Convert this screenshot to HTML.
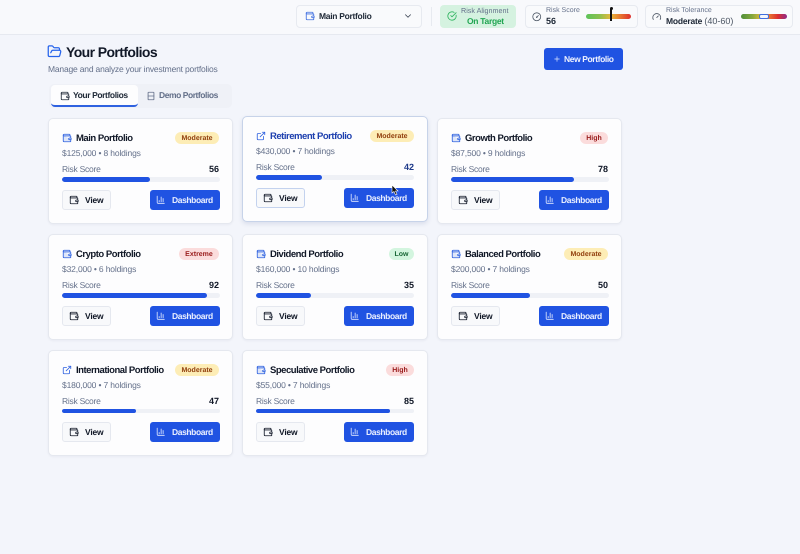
<!DOCTYPE html>
<html><head><meta charset="utf-8"><style>
*{box-sizing:border-box;margin:0;padding:0}
html,body{width:800px;height:554px;overflow:hidden;background:#f3f5fb;font-family:"Liberation Sans",sans-serif;position:relative;text-rendering:geometricPrecision}
.a{position:absolute;white-space:nowrap}
svg.i{position:absolute;fill:none;stroke:currentColor;stroke-width:2;stroke-linecap:round;stroke-linejoin:round}
.top{position:absolute;left:0;top:0;width:800px;height:35px;background:#f8f9fc;border-bottom:1px solid #e6e9f0}
.box{position:absolute;top:5px;height:23px;background:#f9fafc;border:1px solid #e7eaf0;border-radius:4px}
.card{position:absolute;width:185px;height:106px;background:#fdfdfe;border:1px solid #e5e8ef;border-radius:5px;box-shadow:0 1px 2px rgba(30,40,80,.05)}
.card.m{width:186px}
.card.h{border-color:#c7d3e9;box-shadow:0 2px 5px rgba(30,60,120,.12)}
.t{position:absolute;left:27px;top:13px;font-size:9.5px;letter-spacing:-.48px;line-height:13px;font-weight:bold;color:#111827;white-space:nowrap}
.h .t{color:#1e40af}
.ic{left:13px;top:14px;width:10px;height:10px;color:#2f62e0;fill:rgba(47,98,224,.15)!important}
.b{position:absolute;top:13px;right:13px;height:12px;border-radius:6px;font-size:7px;line-height:13px;font-weight:bold;text-align:center}
.mod{width:44px;background:#fdedb6;color:#92400e}
.hi{width:28px;background:#fbdcdc;color:#991b1b}
.ex{width:40px;background:#fbdcdc;color:#991b1b}
.lo{width:25px;background:#d3f5df;color:#166534}
.s{position:absolute;left:13px;top:29px;font-size:8.5px;letter-spacing:-.15px;line-height:11px;color:#64708a;white-space:nowrap}
.r{position:absolute;left:13px;top:45px;font-size:8.5px;letter-spacing:-.25px;line-height:11px;color:#64708a}
.n{position:absolute;right:13px;top:45px;font-size:9px;line-height:11px;font-weight:bold;color:#111827}
.h .n{color:#1e3a8a}
.bar{position:absolute;left:13px;top:58px;width:158px;height:4.5px;background:#eff1f6;border-radius:3px;overflow:hidden}
.bar i{display:block;height:100%;background:#2053e2;border-radius:3px}
.v{position:absolute;left:13px;top:71px;width:48.500px;height:20px;background:#f8f9fb;border:1px solid #e5e8ef;border-radius:3px;color:#111827;font-size:8.5px;letter-spacing:-.2px;font-weight:bold;line-height:18px;padding-left:22px}
.h .v{border-color:#c3d2ee}
.v svg{left:6px;top:4px;width:10px;height:10px}
.d{position:absolute;left:101px;top:71px;width:70px;height:20px;background:#2053e2;border-radius:3px;color:#e8eeff;font-size:8.5px;letter-spacing:-.4px;font-weight:bold;line-height:20px;padding-left:22px}
.d svg{left:6px;top:5px;width:9.5px;height:9.5px}
</style></head><body>
<svg width="0" height="0" style="position:absolute"><defs>
<symbol id="w" viewBox="0 0 24 24"><path d="M19 7V4a1 1 0 0 0-1-1H5a2 2 0 0 0 0 4h15a1 1 0 0 1 1 1v4h-3a2 2 0 0 0 0 4h3a1 1 0 0 0 1-1v-2a1 1 0 0 0-1-1"/><path d="M3 5v14a2 2 0 0 0 2 2h15a1 1 0 0 0 1-1v-4"/></symbol>
<symbol id="e" viewBox="0 0 24 24"><path d="M18 13v6a2 2 0 0 1-2 2H5a2 2 0 0 1-2-2V8a2 2 0 0 1 2-2h6"/><path d="M15 3h6v6"/><path d="M10 14 21 3"/></symbol>
<symbol id="c" viewBox="0 0 24 24"><path d="M3 3v16a2 2 0 0 0 2 2h16"/><path d="M18 17V9"/><path d="M13 17V5"/><path d="M8 17v-3"/></symbol>
</defs></svg>

<div class="top"></div>
<div class="box" style="left:296px;width:126px"></div>
<svg class="i" style="left:305px;top:11px;width:10px;height:10px;color:#3f6fe0"><use href="#w"/></svg>
<div class="a" style="left:319px;top:11px;font-size:8.5px;letter-spacing:-.3px;line-height:11px;font-weight:bold;color:#1f2937">Main Portfolio</div>
<svg class="i" viewBox="0 0 24 24" style="left:403px;top:11px;width:10px;height:10px;color:#374151"><path d="m6 9 6 6 6-6"/></svg>
<div class="a" style="left:431px;top:7px;width:1px;height:19px;background:#e7eaf0"></div>

<div class="a" style="left:440px;top:5px;width:76px;height:23px;background:#d5f2e0;border-radius:4px"></div>
<svg class="i" viewBox="0 0 24 24" style="left:447px;top:11px;width:10px;height:10px;color:#2fb45f"><path d="M21.801 10A10 10 0 1 1 17 3.335"/><path d="m9 11 3 3L22 4"/></svg>
<div class="a" style="left:461px;top:6px;font-size:7.2px;line-height:10px;color:#64708a">Risk Alignment</div>
<div class="a" style="left:467px;top:16px;font-size:8.5px;letter-spacing:-.3px;line-height:11px;font-weight:bold;color:#22a653">On Target</div>

<div class="box" style="left:525px;width:113px"></div>
<svg class="i" viewBox="0 0 24 24" style="left:532px;top:12px;width:9.5px;height:9.5px;color:#4b5563"><circle cx="12" cy="12" r="10"/><path d="m12 13 4-4"/><circle cx="12" cy="13" r="1"/></svg>
<div class="a" style="left:546px;top:6px;font-size:7px;line-height:10px;color:#64708a">Risk Score</div>
<div class="a" style="left:546px;top:16px;font-size:9px;line-height:11px;font-weight:bold;color:#1f2937">56</div>
<div class="a" style="left:586px;top:14px;width:45px;height:5px;border-radius:3px;background:linear-gradient(90deg,#5cc45a 0,#8cc04e 30%,#e6b93c 55%,#e87a30 75%,#dc2f2f 100%)"></div>
<div class="a" style="left:610px;top:9px;width:2px;height:12px;background:#111"></div>
<div class="a" style="left:609.5px;top:7px;width:3px;height:3px;border-radius:50%;background:#111"></div>

<div class="box" style="left:645px;width:148px"></div>
<svg class="i" viewBox="0 0 24 24" style="left:652px;top:12px;width:9.5px;height:9.5px;color:#4b5563"><path d="m12 14 4-4"/><path d="M3.34 19a10 10 0 1 1 17.32 0"/></svg>
<div class="a" style="left:666px;top:6px;font-size:7px;line-height:10px;color:#64708a">Risk Tolerance</div>
<div class="a" style="left:666px;top:16px;font-size:8.5px;letter-spacing:-.2px;line-height:11px;font-weight:bold;color:#1f2937">Moderate <span style="color:#4b5563;font-weight:normal;font-size:9px;letter-spacing:0">(40-60)</span></div>
<div class="a" style="left:741px;top:14px;width:46px;height:5px;border-radius:3px;background:linear-gradient(90deg,#4f8f3a 0,#86a83c 25%,#e6b93c 45%,#e87a30 60%,#dc2f2f 80%,#8e2a8a 100%)"></div>
<div class="a" style="left:759px;top:14px;width:10px;height:5px;border-radius:2px;background:#f4f6fc;border:1px solid #3f6fe0"></div>

<svg class="i" viewBox="0 0 24 24" style="left:47px;top:44px;width:15px;height:15px;color:#2563eb"><path d="m6 14 1.5-2.9A2 2 0 0 1 9.24 10H20a2 2 0 0 1 1.94 2.5l-1.54 6a2 2 0 0 1-1.95 1.5H4a2 2 0 0 1-2-2V5a2 2 0 0 1 2-2h3.9a2 2 0 0 1 1.69.9l.81 1.2a2 2 0 0 0 1.67.9H18a2 2 0 0 1 2 2v2"/></svg>
<div class="a" style="left:66px;top:43px;font-size:14px;letter-spacing:-.6px;line-height:18px;font-weight:bold;color:#111827">Your Portfolios</div>
<div class="a" style="left:48px;top:64px;font-size:8.5px;letter-spacing:-.19px;line-height:11px;color:#64708a">Manage and analyze your investment portfolios</div>

<div class="a" style="left:544px;top:48px;width:79px;height:22px;background:#2053e2;border-radius:3px"></div>
<svg class="i" viewBox="0 0 24 24" style="left:553px;top:55px;width:8px;height:8px;color:#dfe7ff"><path d="M5 12h14"/><path d="M12 5v14"/></svg>
<div class="a" style="left:564px;top:54px;font-size:8.5px;letter-spacing:-.4px;line-height:11px;font-weight:bold;color:#eef2ff">New Portfolio</div>

<div class="a" style="left:49px;top:84px;width:183px;height:24px;background:#eff1f7;border-radius:5px"></div>
<div class="a" style="left:51px;top:85px;width:87px;height:22px;background:#fdfdfe;border-radius:4px;border-bottom:2px solid #2f62e0"></div>
<svg class="i" style="left:60px;top:91px;width:10px;height:10px;color:#1f2937"><use href="#w"/></svg>
<div class="a" style="left:73px;top:90px;font-size:8.5px;letter-spacing:-.4px;line-height:11px;font-weight:bold;color:#1f2937">Your Portfolios</div>
<svg class="i" viewBox="0 0 24 24" style="left:146px;top:91px;width:10px;height:10px;color:#64708a"><rect x="5" y="3" width="14" height="18" rx="1"/><path d="M5 12h14"/></svg>
<div class="a" style="left:159px;top:90px;font-size:8.5px;letter-spacing:-.45px;line-height:11px;font-weight:bold;color:#64708a">Demo Portfolios</div>

<div class="card" style="left:48px;top:118px">
<svg class="i ic"><use href="#w"/></svg><div class="t">Main Portfolio</div><div class="b mod">Moderate</div>
<div class="s">$125,000 • 8 holdings</div><div class="r">Risk Score</div><div class="n">56</div><div class="bar"><i style="width:56%"></i></div>
<div class="v"><svg class="i"><use href="#w"/></svg>View</div><div class="d"><svg class="i"><use href="#c"/></svg>Dashboard</div></div>

<div class="card h m" style="left:242px;top:116px">
<svg class="i ic" style="fill:none!important"><use href="#e"/></svg><div class="t">Retirement Portfolio</div><div class="b mod">Moderate</div>
<div class="s">$430,000 • 7 holdings</div><div class="r">Risk Score</div><div class="n">42</div><div class="bar"><i style="width:42%"></i></div>
<div class="v"><svg class="i"><use href="#w"/></svg>View</div><div class="d"><svg class="i"><use href="#c"/></svg>Dashboard</div></div>

<div class="card" style="left:437px;top:118px">
<svg class="i ic"><use href="#w"/></svg><div class="t">Growth Portfolio</div><div class="b hi">High</div>
<div class="s">$87,500 • 9 holdings</div><div class="r">Risk Score</div><div class="n">78</div><div class="bar"><i style="width:78%"></i></div>
<div class="v"><svg class="i"><use href="#w"/></svg>View</div><div class="d"><svg class="i"><use href="#c"/></svg>Dashboard</div></div>

<div class="card" style="left:48px;top:234px">
<svg class="i ic"><use href="#w"/></svg><div class="t">Crypto Portfolio</div><div class="b ex">Extreme</div>
<div class="s">$32,000 • 6 holdings</div><div class="r">Risk Score</div><div class="n">92</div><div class="bar"><i style="width:92%"></i></div>
<div class="v"><svg class="i"><use href="#w"/></svg>View</div><div class="d"><svg class="i"><use href="#c"/></svg>Dashboard</div></div>

<div class="card m" style="left:242px;top:234px">
<svg class="i ic"><use href="#w"/></svg><div class="t">Dividend Portfolio</div><div class="b lo">Low</div>
<div class="s">$160,000 • 10 holdings</div><div class="r">Risk Score</div><div class="n">35</div><div class="bar"><i style="width:35%"></i></div>
<div class="v"><svg class="i"><use href="#w"/></svg>View</div><div class="d"><svg class="i"><use href="#c"/></svg>Dashboard</div></div>

<div class="card" style="left:437px;top:234px">
<svg class="i ic"><use href="#w"/></svg><div class="t">Balanced Portfolio</div><div class="b mod">Moderate</div>
<div class="s">$200,000 • 7 holdings</div><div class="r">Risk Score</div><div class="n">50</div><div class="bar"><i style="width:50%"></i></div>
<div class="v"><svg class="i"><use href="#w"/></svg>View</div><div class="d"><svg class="i"><use href="#c"/></svg>Dashboard</div></div>

<div class="card" style="left:48px;top:349.5px">
<svg class="i ic" style="fill:none!important"><use href="#e"/></svg><div class="t">International Portfolio</div><div class="b mod">Moderate</div>
<div class="s">$180,000 • 7 holdings</div><div class="r">Risk Score</div><div class="n">47</div><div class="bar"><i style="width:47%"></i></div>
<div class="v"><svg class="i"><use href="#w"/></svg>View</div><div class="d"><svg class="i"><use href="#c"/></svg>Dashboard</div></div>

<div class="card m" style="left:242px;top:349.5px">
<svg class="i ic"><use href="#w"/></svg><div class="t">Speculative Portfolio</div><div class="b hi">High</div>
<div class="s">$55,000 • 7 holdings</div><div class="r">Risk Score</div><div class="n">85</div><div class="bar"><i style="width:85%"></i></div>
<div class="v"><svg class="i"><use href="#w"/></svg>View</div><div class="d"><svg class="i"><use href="#c"/></svg>Dashboard</div></div>

<svg style="position:absolute;left:391px;top:185px;width:8px;height:11px" viewBox="0 0 8 11"><path d="M1 0v8l2-1.5L4.5 10 6 9.300 4.500 6H7z" fill="#111" stroke="#fff" stroke-width=".6"/></svg>
</body></html>
